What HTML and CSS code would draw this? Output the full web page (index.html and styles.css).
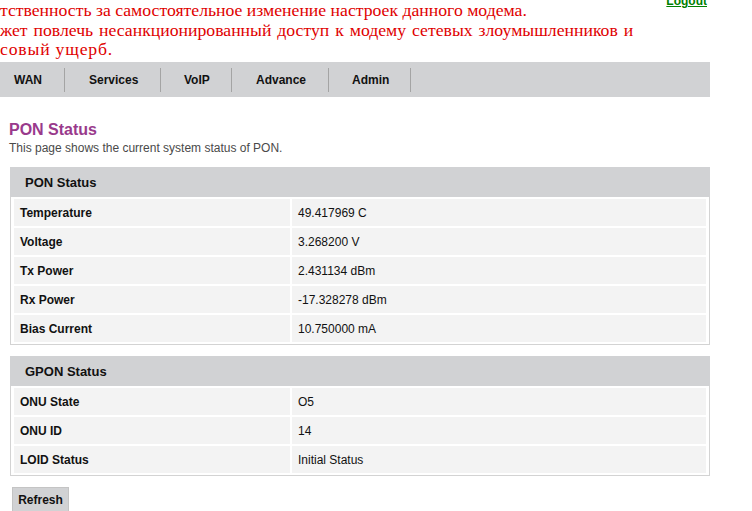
FILE: index.html
```html
<!DOCTYPE html>
<html>
<head>
<meta charset="utf-8">
<link rel="stylesheet" href="styles.css">
</head>
<body>
<div class="page">
  <div class="top">
    <div class="warn">
      <p class="l1">тственность за самостоятельное изменение настроек данного модема.</p>
      <p class="l2">жет повлечь несанкционированный доступ к модему сетевых злоумышленников и</p>
      <p class="l3">совый ущерб.</p>
    </div>
    <a class="logout" href="#">Logout</a>
  </div>
  <nav class="menu">
    <span class="item i-wan">WAN</span>
    <span class="item i-services">Services</span>
    <span class="item i-voip">VoIP</span>
    <span class="item i-adv">Advance</span>
    <span class="item i-admin">Admin</span>
  </nav>
  <div class="content">
    <h1 class="title">PON Status</h1>
    <p class="desc">This page shows the current system status of PON.</p>
    <div class="box">
      <div class="box-head">PON Status</div>
      <table class="grid">
        <tr><td class="k">Temperature</td><td class="v">49.417969 C</td></tr>
        <tr><td class="k">Voltage</td><td class="v">3.268200 V</td></tr>
        <tr><td class="k">Tx Power</td><td class="v">2.431134 dBm</td></tr>
        <tr><td class="k">Rx Power</td><td class="v">-17.328278 dBm</td></tr>
        <tr><td class="k">Bias Current</td><td class="v">10.750000 mA</td></tr>
      </table>
    </div>
    <div class="box box2">
      <div class="box-head">GPON Status</div>
      <table class="grid">
        <tr><td class="k">ONU State</td><td class="v">O5</td></tr>
        <tr><td class="k">ONU ID</td><td class="v">14</td></tr>
        <tr><td class="k">LOID Status</td><td class="v">Initial Status</td></tr>
      </table>
    </div>
    <button class="btn">Refresh</button>
  </div>
</div>
</body>
</html>
```

FILE: styles.css
```css
html, body { margin: 0; padding: 0; background: #fff; }
body { font-family: "Liberation Sans", Arial, sans-serif; color: #000; }
.page { width: 752px; height: 511px; overflow: hidden; }

.top { display: flex; justify-content: space-between; align-items: flex-start; width: 710px; height: 62px; overflow: hidden; }
.warn { font-family: "Liberation Serif", "Times New Roman", serif; font-size: 17.7px; line-height: 19.5px; color: #e00000; margin-top: 1px; }
.warn p { margin: 0; white-space: nowrap; }
.l2 { word-spacing: 1.5px; }
.l3 { letter-spacing: 0.8px; }
.logout { color: #008000; font-weight: bold; font-size: 12px; text-decoration: underline; margin-top: -6px; margin-right: 3px; line-height: 14px; }

.menu { display: flex; width: 710px; height: 35px; background: #d1d2d4; align-items: center; }
.item { font-size: 12px; font-weight: bold; color: #111; height: 24px; line-height: 24px; border-right: 1px solid #a4a4a4; box-sizing: border-box; }
.i-wan { width: 65px; padding-left: 14px; }
.i-services { width: 96px; padding-left: 24px; }
.i-voip { width: 71px; padding-left: 23px; }
.i-adv { width: 97px; padding-left: 24px; }
.i-admin { width: 82px; padding-left: 23px; }

.content { padding: 0 0 0 9px; }
.title { margin: 24px 0 0; font-size: 16px; line-height: 18px; color: #993a8c; font-weight: bold; }
.desc { margin: 2px 0 0; font-size: 12px; line-height: 14px; color: #4a4a4a; }

.box { margin: 12px 0 0 1px; width: 700px; box-sizing: border-box; border: 1px solid #d3d3d3; border-top: 0; }
.box2 { margin-top: 11px; }
.box-head { height: 30px; line-height: 31px; background: #d1d2d4; margin: 0 -1px; padding-left: 15px; font-size: 13px; font-weight: bold; color: #111; }
.grid { width: 100%; border-collapse: separate; border-spacing: 2px; padding: 0 1px; }
.grid td { background: #f3f3f3; height: 27px; padding: 1px 0 0 6px; font-size: 12px; box-sizing: border-box; }
.grid .k { width: 276px; font-weight: bold; color: #111; }
.grid .v { color: #111; }

.btn { margin: 11px 0 0 3px; width: 57px; height: 26px; background: #d1d2d4; border: 1px solid #c4c4c4; font-family: "Liberation Sans", Arial, sans-serif; font-size: 12px; font-weight: bold; color: #111; padding: 0; display: block; }
```
